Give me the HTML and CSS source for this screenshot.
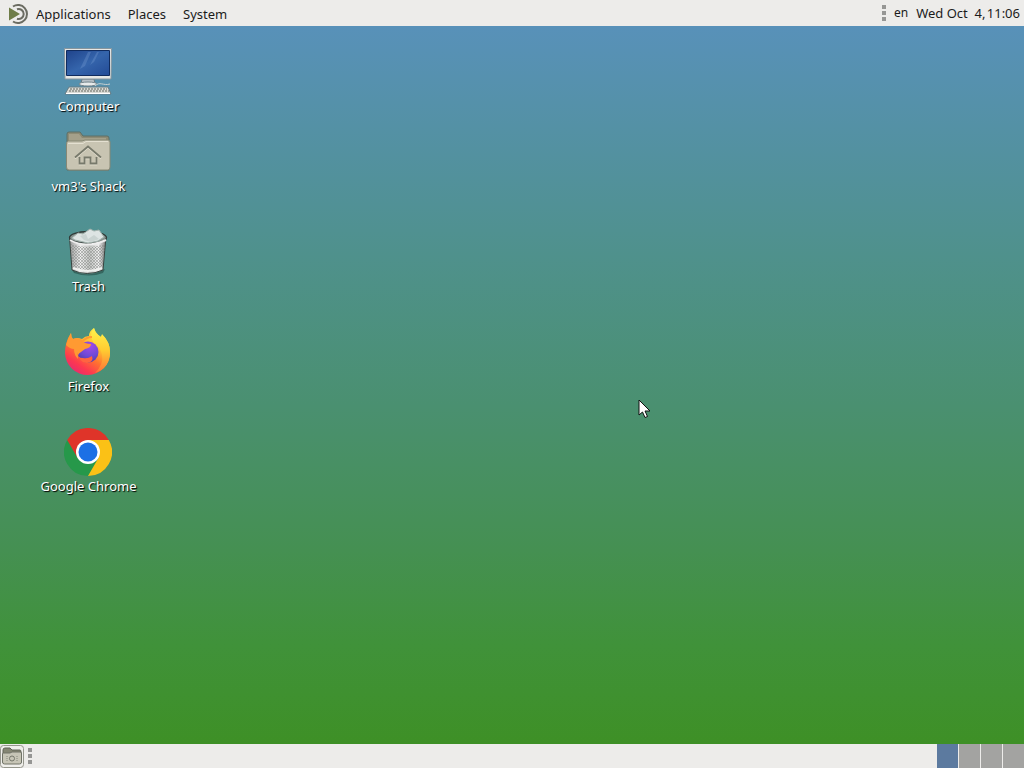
FILE: index.html
```html
<!DOCTYPE html>
<html lang="en">
<head>
<meta charset="utf-8">
<title>Desktop</title>
<link rel="stylesheet" href="styles.css">
</head>
<body>
<header class="panel top-panel">
  <nav class="menus">
    <button class="menu" type="button">
      <svg class="logo" viewBox="0 0 22 22" aria-hidden="true">
        <g fill="none" stroke="#6b6c62" stroke-width="2">
          <path d="M5 3.500A9 9 0 1 1 5 18.500"/>
          <path d="M9 6.300A5 5 0 1 1 9 15.700"/>
        </g>
        <path d="M1 4.500L12 11L1 17.500Z" fill="#6f7d48"/>
      </svg>
      Applications
    </button>
    <button class="menu" type="button">Places</button>
    <button class="menu" type="button">System</button>
  </nav>
  <div class="tray">
    <span class="handle"><i></i><i></i><i></i></span>
    <button class="keyboard" type="button">en</button>
    <button class="clock" type="button">Wed Oct&nbsp; 4,&#8202;11:06</button>
  </div>
</header>

<main class="desktop">
  <div class="icons">
    <a class="item item-short" href="#computer">
      <svg class="icon" viewBox="0 0 48 48" aria-hidden="true">
        <defs>
          <linearGradient id="screen" x1="0" y1="0" x2="1" y2="1">
            <stop offset="0" stop-color="#1f438b"/><stop offset=".5" stop-color="#3565ac"/><stop offset="1" stop-color="#234b96"/>
          </linearGradient>
        </defs>
        <path d="M18 31h12l1 5H17z" fill="#b6bfc5" stroke="#697981"/>
        <ellipse cx="24" cy="36" rx="9" ry="2" fill="#e8ebeb" stroke="#74848b"/>
        <path d="M.5 .5h47L47 31H1z" fill="#e6e7e5" stroke="#87969e"/>
        <path d="M2.500 2.500h43v25h-43z" fill="url(#screen)" stroke="#102b5e"/>
        <path d="M24 4l-8 17 5-3 6-14zM33 4l-7 13 4-3 5-10z" fill="#7da2d8" opacity=".3"/>
        <path d="M31 38c5-5 8 0 15-2" fill="none" stroke="#c7d1d2"/>
        <path d="M5 39h39l3 7H1z" fill="#d9dad5" stroke="#667c86"/>
        <path d="M6 41h37M5 43h40" stroke="#8b8d85" stroke-width="1.300" stroke-dasharray="2 1"/>
        <path d="M2 45.500h44" stroke="#fff"/>
      </svg>
      <span class="label">Computer</span>
    </a>
    <a class="item" href="#home">
      <svg class="icon" viewBox="0 0 48 48" aria-hidden="true">
        <path d="M3 42V6q0-2 2-2h11l3 4h24q2 0 2 2v32z" fill="#8d8b74" stroke="#5c6e66"/>
        <path d="M5 6h10l3 4h24v6H5z" fill="#a4a08a"/>
        <path d="M2.500 16q0-3 2-3H18l3-1h23q2 0 2 2v25q0 3-2 3H5q-2.500 0-2.500-3z" fill="#c8c4b2" stroke="#878875"/>
        <path d="M4 15.500h15l3-2h22" fill="none" stroke="#e4e0d1"/>
        <path d="M11 30.500l13-11 13 11M15.500 30v6.500h5v-6h6v6h6V30" fill="none" stroke="#eeeadb" stroke-width="1.500"/>
        <path d="M11 29.500l13-11 13 11M15.500 29v6.500h5v-6h6v6h6V29" fill="none" stroke="#77796b" stroke-width="1.800"/>
      </svg>
      <span class="label">vm3's Shack</span>
    </a>
    <a class="item" href="#trash">
      <svg class="icon" viewBox="0 0 48 48" aria-hidden="true">
        <defs>
          <linearGradient id="metal">
            <stop offset="0" stop-color="#999"/><stop offset=".3" stop-color="#eee"/><stop offset=".55" stop-color="#c3c5c3"/><stop offset=".8" stop-color="#eee"/><stop offset="1" stop-color="#777"/>
          </linearGradient>
          <pattern id="mesh" width="3" height="3" patternUnits="userSpaceOnUse">
            <path d="M0 0l3 3M3 0L0 3" stroke="#858885" stroke-width=".5"/>
          </pattern>
        </defs>
        <path d="M8 42q16 9 33-1l-2 4q-14 5-29 0z" fill="#244b44" opacity=".6"/>
        <path d="M5.500 9L8 42q15 7 31 0l3-33z" fill="url(#metal)" stroke="#394440"/>
        <path d="M6.500 16L8.500 40q15 7 30 0l2.500-24q-17 6-34.500 0z" fill="url(#mesh)"/>
        <ellipse cx="24" cy="9.500" rx="18.500" ry="6" fill="#87928e" stroke="#303b38" stroke-width="1.300"/>
        <path d="M8 10l6-5 5 1 7-5 4 2 5-1 5 7-6 4-10 2-13-3z" fill="#dde4e3" stroke="#a3b3ae"/>
        <path d="M16 8l6-2 2 5 6-4 5 4-8 3-7-2z" fill="#c9d3d1"/>
        <path d="M6 12q16 9 36 0" fill="none" stroke="#eee" stroke-width="2"/>
        <path d="M9 40q15 6 29 0" fill="none" stroke="#f1f1ef" stroke-width="2"/>
      </svg>
      <span class="label">Trash</span>
    </a>
    <a class="item" href="#firefox">
      <svg class="icon" viewBox="0 0 48 48" aria-hidden="true">
        <defs>
          <linearGradient id="flame" x1=".85" y1=".1" x2=".25" y2="1">
            <stop offset="0" stop-color="#fff04b"/><stop offset=".3" stop-color="#ffc332"/><stop offset=".55" stop-color="#ff742f"/><stop offset=".8" stop-color="#fd3850"/><stop offset="1" stop-color="#e52a72"/>
          </linearGradient>
          <linearGradient id="tail" x1="0" y1="0" x2="0" y2="1">
            <stop offset="0" stop-color="#fff34c"/><stop offset=".5" stop-color="#ffcb31"/><stop offset="1" stop-color="#ff7139"/>
          </linearGradient>
          <radialGradient id="globe" cx=".6" cy=".2" r=".9">
            <stop offset="0" stop-color="#a24be8"/><stop offset=".55" stop-color="#7049d6"/><stop offset="1" stop-color="#483a99"/>
          </radialGradient>
        </defs>
        <path d="M7 5q0 4 2 6 4-2 9 0 3-3 7-3 0-5 5-8 2 6 7 9l1-3q8 8 8 18A22.500 22.500 0 0 1 1 25Q1 14 7 5z" fill="url(#flame)"/>
        <path d="M30 0q1 6 7 9l1-2q8 7 8 17 0 16-15 21 9-9 7-18-1-7-8-12-6-7 0-15z" fill="url(#tail)"/>
        <circle cx="24" cy="24" r="10.500" fill="url(#globe)"/>
        <path d="M2 17q2-7 5-12 0 4 2 6 5-2 9 1 2 4 9 4 0 4-6 5l-4 3q-4 2-3 7-4-4-4-10-4 0-8-4z" fill="#ff9a32"/>
        <path d="M13 24q0 6 6 6 5 1 9-2 2 6-5 7-8 0-10-11z" fill="#ff6440"/>
        <path d="M18 14q4-5 10-5" fill="none" stroke="#ff9a32" stroke-width="2"/>
      </svg>
      <span class="label">Firefox</span>
    </a>
    <a class="item" href="#chrome">
      <svg class="icon" viewBox="0 0 48 48" aria-hidden="true">
        <path d="M24 24L3.200 12A24 24 0 0 0 24 48L36 30z" fill="#26984a"/>
        <path d="M24 12h20.800A24 24 0 0 1 24 48l10.400-18z" fill="#fbc116"/>
        <path d="M3.200 12A24 24 0 0 1 44.800 12H24L13.600 30z" fill="#df3429"/>
        <circle cx="24" cy="24" r="12" fill="#fff"/>
        <circle cx="24" cy="24" r="9.500" fill="#1c70e5"/>
      </svg>
      <span class="label">Google Chrome</span>
    </a>
  </div>
  <svg class="pointer" viewBox="0 0 13 20" aria-hidden="true">
    <path d="M1 1v15l3.500-3 2.500 5.500 2.500-1-2.500-5.500h5z" fill="#fff" stroke="#111"/>
  </svg>
</main>

<footer class="panel bottom-panel">
  <button class="show-desktop" type="button" aria-label="Show desktop">
    <svg viewBox="0 0 24 24" aria-hidden="true">
      <rect x=".5" y="1.500" width="23" height="22" rx="3" fill="#f0efeb" stroke="#96978d"/>
      <path d="M3 19V6q0-2 2-2h5l2 2h8q1 0 1 2v11z" fill="#858673" stroke="#616357"/>
      <path d="M2.500 10q0-1 1-1H10l2-1h8q1.500 0 1.500 1v9q0 2-2 2h-15q-2 0-2-2z" fill="#c7c5b6" stroke="#707367"/>
      <circle cx="12" cy="14.500" r="2.500" fill="none" stroke="#75776b"/>
      <path d="M7 12v5M17 12v5" stroke="#85877a" stroke-dasharray="1 1"/>
    </svg>
  </button>
  <span class="handle"><i></i><i></i><i></i></span>
  <div class="workspaces">
    <button class="workspace active" type="button" aria-label="Workspace 1"></button>
    <button class="workspace" type="button" aria-label="Workspace 2"></button>
    <button class="workspace" type="button" aria-label="Workspace 3"></button>
    <button class="workspace" type="button" aria-label="Workspace 4"></button>
  </div>
</footer>
</body>
</html>
```

FILE: styles.css
```css
* { box-sizing: border-box; }

body {
  display: flex;
  flex-direction: column;
  min-height: 100vh;
  margin: 0;
  font: 13px/18px "Noto Sans", "Open Sans", sans-serif;
  color: #1b1b1b;
}

button {
  margin: 0;
  padding: 0;
  border: 0;
  background: none;
  color: inherit;
  font: inherit;
}

.panel {
  display: flex;
  align-items: center;
  background: #edecea;
}

.top-panel {
  justify-content: space-between;
  height: 26px;
  padding: 0 4px 0 8px;
}

.menus {
  display: flex;
  gap: 17px;
}

.menu {
  display: flex;
  align-items: center;
  gap: 6px;
  padding-top: 1px;
}

.logo {
  width: 22px;
  height: 22px;
}

.tray {
  display: flex;
  align-items: center;
  gap: 8px;
}

.keyboard { font-size: 12px; }

.handle {
  display: flex;
  flex-direction: column;
  gap: 2px;
}

.handle i {
  width: 4px;
  height: 4px;
  background: #969694;
}

.desktop {
  position: relative;
  flex: 1;
  padding: 22px 28px;
  background: linear-gradient(#5891b9, #4f918c 32%, #4a9070 53%, #459052 73%, #40923a 86%, #3e9026);
}

.icons {
  display: flex;
  flex-direction: column;
  width: 120px;
}

.item {
  display: flex;
  flex-direction: column;
  align-items: center;
  height: 100px;
  color: #fff;
  text-decoration: none;
}

.item-short { height: 80px; }

.icon {
  width: 48px;
  height: 48px;
}

.label {
  padding: 1px 0 0 1px;
  text-shadow: 1px 1px 1px #000;
}

.pointer {
  position: absolute;
  left: 62.3%;
  top: 51.9%;
  width: 13px;
  height: 20px;
}

.bottom-panel {
  gap: 4px;
  height: 24px;
}

.show-desktop,
.show-desktop svg {
  display: block;
  width: 24px;
  height: 24px;
}

.workspaces {
  display: flex;
  gap: 1px;
  align-self: stretch;
  margin-left: auto;
  background: #edecea;
}

.workspace {
  width: 21px;
  background: #a3a3a1;
}

.workspace.active { background: #5c7a9f; }
```
